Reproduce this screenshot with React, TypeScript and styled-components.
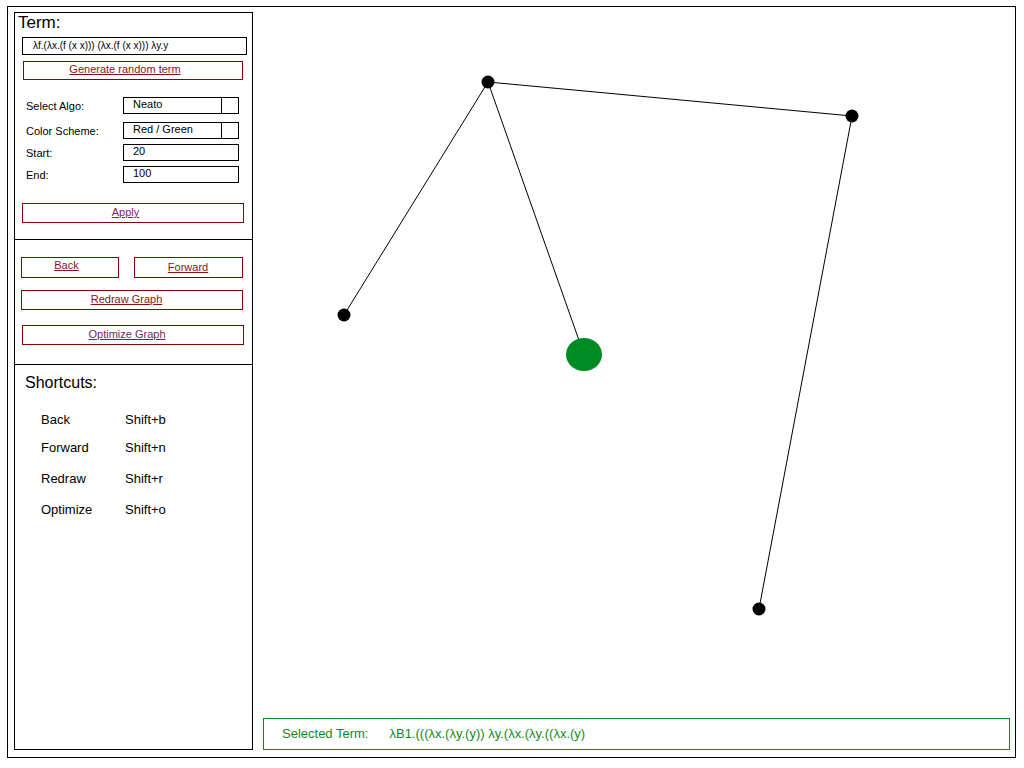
import React from "react";
import styled, { createGlobalStyle } from "styled-components";

const GlobalStyle = createGlobalStyle`
  html, body { margin: 0; padding: 0; background: #fff; }
  body { font-family: "Liberation Sans", Arial, sans-serif; color: #000; }
`;

const Frame = styled.div`
  box-sizing: border-box;
  margin: 6px 0 0 7px;
  width: 1009px;
  height: 752px;
  border: 1px solid #000;
  padding: 5px 5px 7px 6px;
  display: flex;
  gap: 10px;
`;

const SidePanel = styled.div`
  box-sizing: border-box;
  width: 239px;
  height: 738px;
  border: 1px solid #000;
  display: flex;
  flex-direction: column;
`;

const Section = styled.div<{ $height?: number }>`
  box-sizing: border-box;
  ${(p) => (p.$height ? `height: ${p.$height}px;` : "flex: 1;")}
  ${(p) => (p.$height ? "border-bottom: 1px solid #000;" : "")}
  display: flex;
  flex-direction: column;
  align-items: flex-start;
`;

const Title = styled.div`
  font-size: 17px;
  line-height: 20px;
  padding-left: 3px;
`;

const TermBox = styled.div`
  box-sizing: border-box;
  margin: 4px 0 0 7px;
  width: 225px;
  height: 18px;
  border: 1px solid #000;
  padding-left: 10px;
  font-size: 10px;
  line-height: 15px;
  white-space: nowrap;
`;

const LinkButton = styled.div<{
  $w: number;
  $h: number;
  $mt: number;
  $ml: number;
  $pr?: number;
  $pb?: number;
  $visited?: boolean;
}>`
  box-sizing: border-box;
  width: ${(p) => p.$w}px;
  height: ${(p) => p.$h}px;
  margin-top: ${(p) => p.$mt}px;
  margin-left: ${(p) => p.$ml}px;
  padding-right: ${(p) => p.$pr ?? 14}px;
  padding-bottom: ${(p) => p.$pb ?? 2}px;
  border: 1px solid #8b0000;
  display: flex;
  align-items: center;
  justify-content: center;
  font-size: 11px;
  color: ${(p) => (p.$visited ? "#7a1f62" : "#8b1414")};
  text-decoration: underline;
  cursor: pointer;
`;

const FieldRow = styled.div<{ $mt: number }>`
  display: flex;
  align-items: center;
  margin-top: ${(p) => p.$mt}px;
  margin-left: 11px;
`;

const FieldLabel = styled.div`
  width: 97px;
  font-size: 11px;
  line-height: 13px;
  padding-top: 2px;
`;

const FieldBox = styled.div`
  box-sizing: border-box;
  width: 116px;
  height: 17px;
  border: 1px solid #000;
  display: flex;
  font-size: 11px;
`;

const FieldText = styled.div`
  flex: 1;
  padding-left: 9px;
  line-height: 13px;
`;

const SelectArrow = styled.div`
  width: 16px;
  border-left: 1px solid #000;
`;

const ButtonRow = styled.div`
  display: flex;
`;

const ShortcutTitle = styled.div`
  font-size: 16px;
  line-height: 18px;
  margin: 9px 0 0 10px;
`;

const ShortcutRow = styled.div<{ $mt: number }>`
  display: flex;
  font-size: 13px;
  line-height: 16px;
  margin: ${(p) => p.$mt}px 0 0 26px;
`;

const ShortcutKey = styled.div`
  width: 84px;
`;

const RightArea = styled.div`
  flex: 1;
  display: flex;
  flex-direction: column;
`;

const Canvas = styled.div`
  flex: 1;
  position: relative;
`;

const GraphSvg = styled.svg`
  display: block;
  width: 100%;
  height: 100%;
`;

const StatusBar = styled.div`
  box-sizing: border-box;
  height: 32px;
  border: 1px solid #0c8a1e;
  display: flex;
  align-items: center;
  padding: 0 0 2px 18px;
  gap: 21px;
  font-size: 13px;
  color: #11891f;
`;

const shortcuts: [string, string, number][] = [
  ["Back", "Shift+b", 20],
  ["Forward", "Shift+n", 12],
  ["Redraw", "Shift+r", 15],
  ["Optimize", "Shift+o", 15],
];

// graph coordinates relative to the canvas origin (263, 12)
const ox = 263;
const oy = 12;
const nodes = {
  a: [488, 82],
  b: [852, 116],
  c: [344, 315],
  d: [759, 609],
  g: [584, 354.5],
};
const edges: [keyof typeof nodes, keyof typeof nodes][] = [
  ["a", "b"],
  ["a", "c"],
  ["a", "g"],
  ["b", "d"],
];

export default function App() {
  return (
    <>
      <GlobalStyle />
      <Frame>
        <SidePanel>
          <Section $height={227}>
            <Title>Term:</Title>
            <TermBox>λf.(λx.(f (x x))) (λx.(f (x x))) λy.y</TermBox>
            <LinkButton $w={220} $h={19} $mt={6} $ml={8} $pr={16} $pb={3}>
              Generate random term
            </LinkButton>
            <FieldRow $mt={17}>
              <FieldLabel>Select Algo:</FieldLabel>
              <FieldBox>
                <FieldText>Neato</FieldText>
                <SelectArrow />
              </FieldBox>
            </FieldRow>
            <FieldRow $mt={8}>
              <FieldLabel>Color Scheme:</FieldLabel>
              <FieldBox>
                <FieldText>Red / Green</FieldText>
                <SelectArrow />
              </FieldBox>
            </FieldRow>
            <FieldRow $mt={5}>
              <FieldLabel>Start:</FieldLabel>
              <FieldBox>
                <FieldText>20</FieldText>
              </FieldBox>
            </FieldRow>
            <FieldRow $mt={5}>
              <FieldLabel>End:</FieldLabel>
              <FieldBox>
                <FieldText>100</FieldText>
              </FieldBox>
            </FieldRow>
            <LinkButton $w={222} $h={20} $mt={20} $ml={7} $pr={15} $visited>
              Apply
            </LinkButton>
          </Section>
          <Section $height={125}>
            <ButtonRow>
              <LinkButton $w={98} $h={21} $mt={17} $ml={6} $pr={7} $pb={6}>
                Back
              </LinkButton>
              <LinkButton $w={109} $h={21} $mt={17} $ml={15} $pr={1} $pb={2}>
                Forward
              </LinkButton>
            </ButtonRow>
            <LinkButton $w={222} $h={20} $mt={12} $ml={6} $pr={11}>
              Redraw Graph
            </LinkButton>
            <LinkButton $w={222} $h={20} $mt={15} $ml={7} $pr={12} $visited>
              Optimize Graph
            </LinkButton>
          </Section>
          <Section>
            <ShortcutTitle>Shortcuts:</ShortcutTitle>
            {shortcuts.map(([k, v, mt]) => (
              <ShortcutRow key={k} $mt={mt}>
                <ShortcutKey>{k}</ShortcutKey>
                <div>{v}</div>
              </ShortcutRow>
            ))}
          </Section>
        </SidePanel>
        <RightArea>
          <Canvas>
            <GraphSvg>
              {edges.map(([f, t]) => (
                <line
                  key={f + t}
                  x1={nodes[f][0] - ox}
                  y1={nodes[f][1] - oy}
                  x2={nodes[t][0] - ox}
                  y2={nodes[t][1] - oy}
                  stroke="#000"
                  strokeWidth={1}
                />
              ))}
              {(["a", "b", "c", "d"] as const).map((k) => (
                <circle
                  key={k}
                  cx={nodes[k][0] - ox}
                  cy={nodes[k][1] - oy}
                  r={6.5}
                  fill="#000"
                />
              ))}
              <ellipse
                cx={nodes.g[0] - ox}
                cy={nodes.g[1] - oy}
                rx={18}
                ry={16.5}
                fill="#008c23"
              />
            </GraphSvg>
          </Canvas>
          <StatusBar>
            <span>Selected Term:</span>
            <span>λB1.(((λx.(λy.(y)) λy.(λx.(λy.((λx.(y)</span>
          </StatusBar>
        </RightArea>
      </Frame>
    </>
  );
}
